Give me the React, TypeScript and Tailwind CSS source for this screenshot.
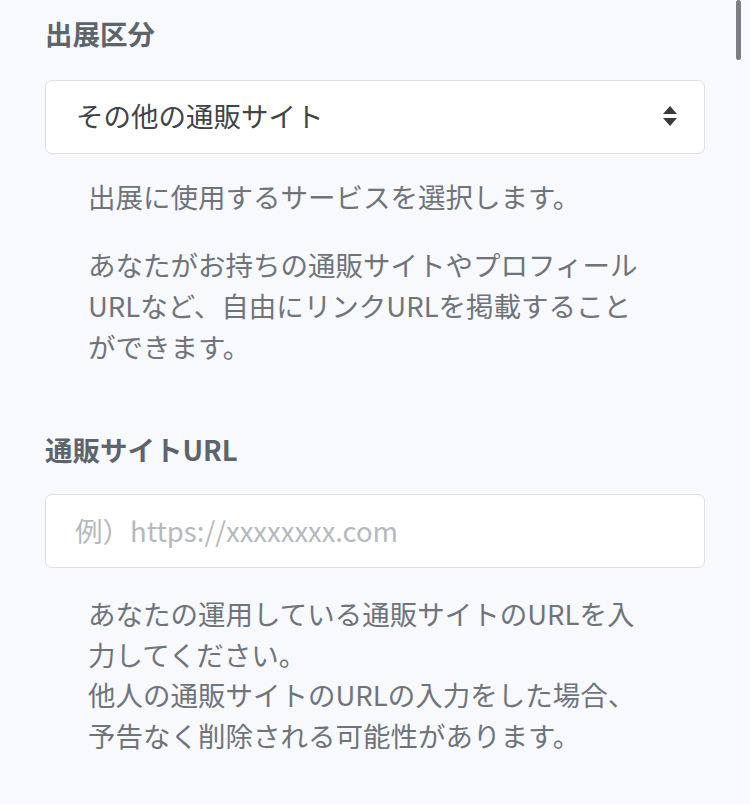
import React from 'react';

const font = { fontFamily: '"Noto Sans CJK JP", "Noto Sans", sans-serif' };

const SelectArrows = () => (
  <svg width="16" height="22" viewBox="0 0 16 22" className="shrink-0">
    <path d="M8 1 L15 9 L1 9 Z" fill="#383a3d" />
    <path d="M1 13 L15 13 L8 21 Z" fill="#383a3d" />
  </svg>
);

export default function App() {
  return (
    <div
      className="relative min-h-screen bg-[#f8f9fc] px-[45px] pt-[13px] pb-10 text-[#6f747b]"
      style={font}
    >
      {/* scrollbar thumb */}
      <div className="absolute right-[9px] top-0 h-[60px] w-[5px] rounded-full bg-[#7c7e82]" />

      {/* 出展区分 */}
      <section>
        <h2 className="text-[27.5px] font-bold leading-[40px] text-[#5d646c]">出展区分</h2>
        <div className="mt-[27px] flex h-[74px] items-center justify-between rounded-[7px] border border-[#dfe0e3] bg-white pb-[3px] pl-[30px] pr-[26px]">
          <span className="text-[27.5px] text-[#404347]">その他の通販サイト</span>
          <SelectArrows />
        </div>
        <div className="pl-[43px] pr-[50px] text-[27.5px] leading-[41px]">
          <p className="mt-[22px]">出展に使用するサービスを選択します。</p>
          <p className="mt-[27px]">
            あなたがお持ちの通販サイトやプロフィールURLなど、自由にリンクURLを掲載することができます。
          </p>
        </div>
      </section>

      {/* 通販サイトURL */}
      <section className="mt-[62px]">
        <h2 className="text-[27.5px] font-bold leading-[40px] text-[#5d646c]">通販サイトURL</h2>
        <div className="mt-[25px] flex h-[74px] items-center rounded-[7px] border border-[#dfe0e3] bg-white pl-[29px]">
          <span className="text-[27.5px] text-[#b5b9be]">例）https://xxxxxxxx.com</span>
        </div>
        <div className="mt-[25px] pl-[43px] pr-[50px] text-[27.5px] leading-[40.5px]">
          <p>あなたの運用している通販サイトのURLを入力してください。</p>
          <p>他人の通販サイトのURLの入力をした場合、予告なく削除される可能性があります。</p>
        </div>
      </section>
    </div>
  );
}
